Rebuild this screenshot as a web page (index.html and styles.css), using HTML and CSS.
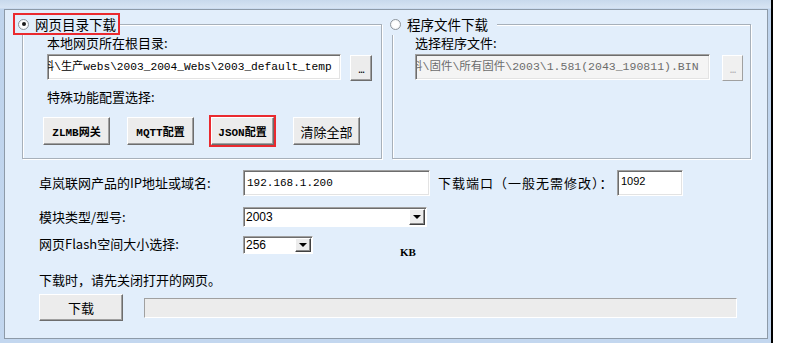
FILE: index.html
```html
<!DOCTYPE html>
<html lang="zh-CN">
<head>
<meta charset="UTF-8">
<title>网页下载</title>
<link rel="stylesheet" href="styles.css">
</head>
<body>

<div class="window">
  <div class="panel">
    <div class="groups">
      <section class="group group-web">
        <div class="legend marked"><span class="radio checked"></span>网页目录下载</div>
        <div class="label">本地网页所在根目录:</div>
        <div class="path-row">
          <div class="field path"><span class="clip">料\生产webs\2003_2004_Webs\2003_default_temp</span></div>
          <button class="btn dots">...</button>
        </div>
        <div class="label gap-top">特殊功能配置选择:</div>
        <div class="btn-row">
          <button class="btn func">ZLMB网关</button>
          <button class="btn func">MQTT配置</button>
          <span class="mark"><button class="btn func json">JSON配置</button></span>
          <button class="btn func cn">清除全部</button>
        </div>
      </section>
      <section class="group group-bin">
        <div class="legend"><span class="radio"></span>程序文件下载</div>
        <div class="label">选择程序文件:</div>
        <div class="path-row">
          <div class="field path disabled"><span class="clip">料\固件\所有固件\2003\1.581(2043_190811).BIN</span></div>
          <button class="btn dots off">...</button>
        </div>
      </section>
    </div>

    <div class="form">
      <div class="row row-ip">
        <div class="label col">卓岚联网产品的IP地址或域名:</div>
        <div class="field ip"><span class="mono">192.168.1.200</span></div>
        <div class="label port-label">下载端口（一般无需修改）：</div>
        <div class="field port"><span class="small">1092</span></div>
      </div>
      <div class="row row-type">
        <div class="label col">模块类型/型号:</div>
        <div class="select wide"><span class="value">2003</span><span class="arrow"></span></div>
      </div>
      <div class="row row-flash">
        <div class="label col">网页Flash空间大小选择:</div>
        <div class="select narrow"><span class="value">256</span><span class="arrow"></span></div>
        <div class="unit">KB</div>
      </div>
      <div class="label note">下载时，请先关闭打开的网页。</div>
      <div class="row row-go">
        <button class="btn go">下载</button>
        <div class="progress"></div>
      </div>
    </div>
  </div>
</div>

</body>
</html>
```

FILE: styles.css
```css
body {
  margin: 0;
  background: #fff;
  font-family: "Noto Sans CJK SC", sans-serif;
  font-size: 13px;
  color: #000;
}
.window {
  box-sizing: border-box;
  width: 773px;
  height: 343px;
  padding: 9px 3px 4px 4px;
  border-right: 2px solid #000;
  background: linear-gradient(to bottom, #c8d9ec 0, #d7e4f3 8px, #bed3ec 9px, #c3d7ef 100%);
}
.panel {
  box-sizing: border-box;
  height: 330px;
  border: 1px solid #8d9aa8;
  background: #e2eefb;
  padding: 14px 15px 0 17px;
}
.groups {
  display: flex;
  gap: 10px;
}
.group {
  box-sizing: border-box;
  border: 1px solid #a7b0ba;
  box-shadow: inset 1px 1px 0 #fff, 1px 1px 0 #fff;
  padding: 0 0 11px 24px;
}
.group-web {
  width: 360px;
}
.group-bin {
  width: 359px;
  padding-left: 22px;
}
.legend {
  box-sizing: border-box;
  display: flex;
  align-items: center;
  gap: 6px;
  width: fit-content;
  height: 22px;
  margin: -12px 0 0 -34px;
  padding: 0 2px 0 3px;
  border: 2px solid transparent;
  background: #e2eefb;
  font-size: 13.5px;
  line-height: 16px;
}
.group-bin .legend {
  margin-left: -30px;
  padding-right: 7px;
}
.legend.marked {
  border-color: #ea2a2f;
}
.radio {
  box-sizing: border-box;
  width: 11px;
  height: 11px;
  border-radius: 50%;
  border: 1px solid #8e959c;
  background: radial-gradient(circle, #fff 40%, #e9ecef 100%);
  display: flex;
  align-items: center;
  justify-content: center;
}
.radio.checked::after {
  content: "";
  width: 4px;
  height: 4px;
  border-radius: 50%;
  background: #1a1a1a;
}
.label {
  line-height: 16px;
  white-space: nowrap;
}
.gap-top {
  margin-top: 8px;
}
.path-row {
  display: flex;
  align-items: flex-start;
  gap: 9px;
  margin-top: 3px;
}
.group-bin .path-row {
  gap: 12px;
}
.field {
  box-sizing: border-box;
  height: 26px;
  background: #fff;
  border: 1px solid;
  border-color: #a0a0a0 #fff #fff #a0a0a0;
  box-shadow: inset 1px 1px 0 #6d6d6d, inset -1px -1px 0 #e3e3e3;
  padding: 2px 0 0 3px;
  overflow: hidden;
  white-space: nowrap;
  line-height: 16px;
}
.path {
  width: 294px;
  font-family: "Liberation Mono", "Noto Sans CJK SC", monospace;
  font-size: 11.2px;
  padding-top: 4px;
}
.group-bin .path {
  width: 295px;
  font-size: 11.5px;
}
.path.disabled {
  background: #f4f4f4;
  color: #6d6d6d;
}
.clip {
  display: inline-block;
  margin-left: -8px;
}
.btn {
  box-sizing: border-box;
  margin: 0;
  padding: 0;
  font-family: "Noto Sans CJK SC", sans-serif;
  font-size: 13px;
  color: #000;
  background: #ececec;
  border: 1px solid;
  border-color: #fff #6d6d6d #6d6d6d #fff;
  box-shadow: inset -1px -1px 0 #a0a0a0;
}
.dots {
  width: 22px;
  height: 26px;
  margin-top: 1px;
  font-size: 11px;
  letter-spacing: -1px;
}
.dots.off {
  width: 21px;
  color: #b0b0b0;
  background: #f0f0f0;
  border-color: #fff #a0a0a0 #a0a0a0 #fff;
  box-shadow: none;
}
.btn-row {
  display: flex;
  align-items: center;
  gap: 17px;
  height: 32px;
  margin: 10px 0 0 -4px;
}
.func {
  width: 67px;
  height: 28px;
  font-family: "Liberation Mono", "Noto Sans CJK SC", monospace;
  font-size: 11px;
  font-weight: bold;
}
.func.cn {
  font-family: "Noto Sans CJK SC", sans-serif;
  font-size: 13px;
  font-weight: normal;
}
.mark {
  display: flex;
  border: 2px solid #ea2a2f;
  margin-left: -2px;
}
.func.json {
  width: 63px;
}
.form {
  margin-top: 11px;
  padding-left: 17px;
}
.row {
  display: flex;
  align-items: center;
}
.col {
  width: 204px;
}
.ip {
  width: 187px;
}
.mono {
  font-family: "Liberation Mono", monospace;
  font-size: 11px;
}
.small {
  font-family: "Liberation Sans", sans-serif;
  font-size: 11px;
}
.port-label {
  margin-left: 8px;
  width: 179px;
  letter-spacing: 1px;
}
.port {
  width: 66px;
  padding-top: 1px;
}
.row-type {
  margin-top: 11px;
}
.select {
  box-sizing: border-box;
  display: flex;
  align-items: center;
  justify-content: space-between;
  background: #fff;
  border: 1px solid;
  border-color: #a0a0a0 #fff #fff #a0a0a0;
  box-shadow: inset 1px 1px 0 #6d6d6d;
  padding: 1px 1px 1px 2px;
  font-family: "Liberation Sans", sans-serif;
  font-size: 12px;
}
.wide {
  width: 184px;
  height: 20px;
}
.narrow {
  width: 70px;
  height: 18px;
}
.arrow {
  box-sizing: border-box;
  width: 16px;
  height: 100%;
  background: #ececec;
  border: 1px solid;
  border-color: #fff #404040 #404040 #fff;
  box-shadow: inset -1px -1px 0 #8a8a8a;
  display: flex;
  align-items: center;
  justify-content: center;
}
.arrow::after {
  content: "";
  border-left: 4px solid transparent;
  border-right: 4px solid transparent;
  border-top: 4px solid #000;
}
.row-flash {
  margin-top: 9px;
  align-items: flex-start;
  height: 24px;
}
.unit {
  margin: 10px 0 0 87px;
  font-family: "Liberation Serif", serif;
  font-size: 11px;
  font-weight: bold;
  line-height: 12px;
}
.note {
  margin-top: 11px;
  line-height: 18px;
}
.row-go {
  margin-top: 5px;
  gap: 21px;
}
.go {
  width: 84px;
  height: 27px;
}
.progress {
  box-sizing: border-box;
  width: 593px;
  height: 20px;
  background: #ececec;
  border: 1px solid;
  border-color: #a0a0a0 #fff #fff #a0a0a0;
}
```
